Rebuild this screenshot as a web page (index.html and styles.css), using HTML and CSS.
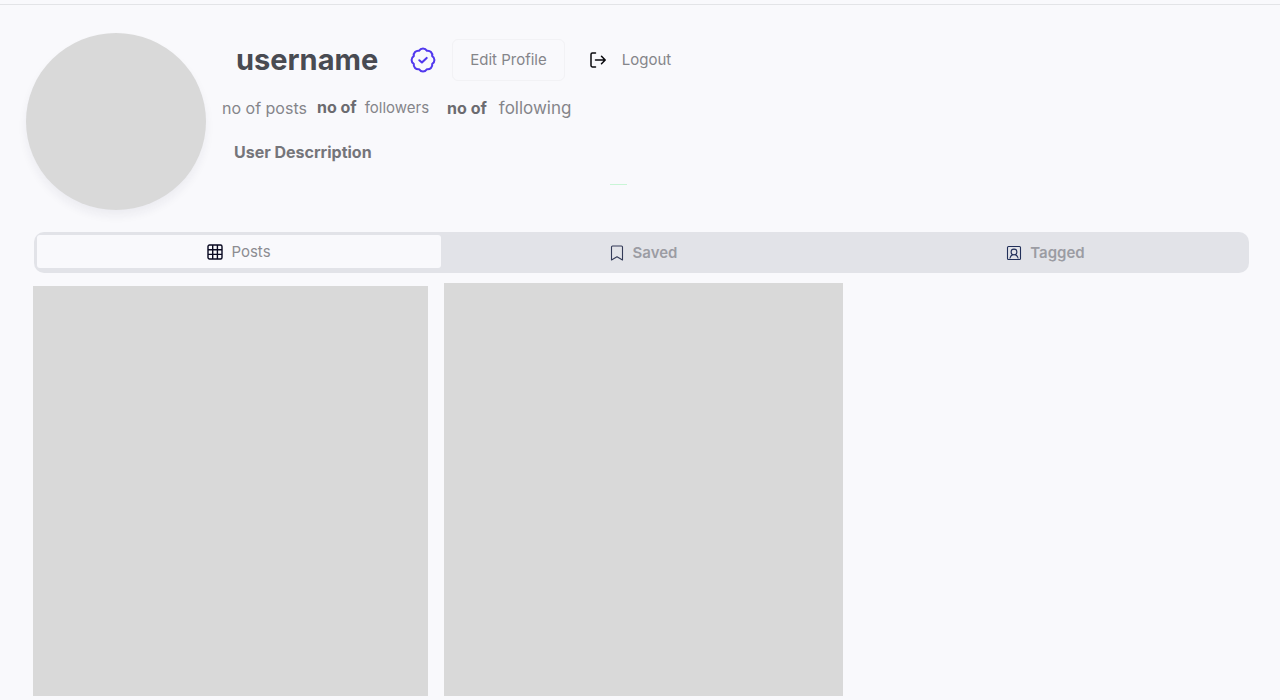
FILE: index.html
```html
<!DOCTYPE html>
<html lang="en">
<head>
<meta charset="utf-8">
<meta name="viewport" content="width=device-width, initial-scale=1">
<title>Profile</title>
<link rel="stylesheet" href="styles.css">
</head>
<body>
<header class="topbar"></header>
<main class="page">
  <section class="profile">
    <div class="avatar"></div>
    <div class="info">
      <div class="identity">
        <h1 class="name">username</h1>
        <svg class="verified" viewBox="0 0 24 24" fill="none" stroke="currentColor" stroke-width="1.9" stroke-linecap="round" stroke-linejoin="round" aria-label="Verified">
          <path d="M3.5 8.4a4.2 4.2 0 0 1 4.9-4.9 4.2 4.2 0 0 1 7.2 0 4.2 4.2 0 0 1 4.9 4.9 4.2 4.2 0 0 1 0 7.2 4.2 4.2 0 0 1-4.9 4.9 4.2 4.2 0 0 1-7.2 0 4.2 4.2 0 0 1-4.9-4.9 4.2 4.2 0 0 1 0-7.2Z"/>
          <path d="M8.6 12.2l2.4 2.1 4.4-4.2"/>
        </svg>
        <button class="edit" type="button">Edit Profile</button>
        <button class="logout" type="button">
          <svg class="logout-icon" viewBox="0 0 18 18" fill="none" stroke="currentColor" stroke-width="1.5" stroke-linecap="round" stroke-linejoin="round">
            <path d="M6.5 2H3.4Q2 2 2 3.4V14.6Q2 16 3.4 16H6.5M6.5 9H16M12.5 5.2L16.2 9l-3.7 3.8"/>
          </svg>
          Logout
        </button>
      </div>
      <div class="stats">
        <span class="posts">no of posts</span>
        <span class="stat"><strong>no of</strong><span class="followers">followers</span></span>
        <span class="stat following"><strong>no of</strong><span class="following-label">following</span></span>
      </div>
      <p class="bio">User Descrription</p>
      <div class="accent"></div>
    </div>
  </section>
  <nav class="tabs">
    <button class="tab active" type="button">
      <svg class="icon" viewBox="0 0 16 16" fill="none" stroke="#080820" stroke-width="1.4">
        <rect x="1" y="1" width="14" height="14" rx="1.5"/>
        <path d="M5.7 1v14M10.4 1v14M1 5.7h14M1 10.4h14"/>
      </svg>
      Posts
    </button>
    <button class="tab" type="button">
      <svg class="icon" viewBox="0 0 16 16" fill="none" stroke="#343b58" stroke-width="1.1" stroke-linejoin="round">
        <path d="M2.5 15V2Q2.5 1 3.5 1h9Q13.5 1 13.5 2v13L8 11.8z"/>
      </svg>
      Saved
    </button>
    <button class="tab" type="button">
      <svg class="icon" viewBox="0 0 16 16" fill="none" stroke="#22305a" stroke-width="1.1">
        <rect x="1.5" y="1.5" width="13" height="13" rx="1"/>
        <circle cx="8" cy="7" r="2.9"/>
        <path d="M3.8 13.5Q4.5 10.3 6.8 9.6M9.2 9.6Q11.5 10.3 12.2 13.5"/>
      </svg>
      Tagged
    </button>
  </nav>
  <section class="gallery">
    <div class="post"></div>
    <div class="post tall"></div>
  </section>
</main>
</body>
</html>
```
FILE: styles.css
```css
* {
  box-sizing: border-box;
}

body {
  margin: 0;
  background: #f9f9fc;
  color: #85858a;
  font-family: Inter, "Liberation Sans", sans-serif;
  font-size: 16px;
  line-height: 20px;
}

button {
  padding: 0;
  border: 0;
  background: none;
  color: inherit;
  font: inherit;
  cursor: pointer;
}

.topbar {
  height: 5px;
  border-bottom: 1px solid #e3e4e7;
}

.page {
  padding: 28px 31px 4px 33px;
}

.profile {
  display: flex;
  gap: 16px;
  margin-left: -7px;
}

.avatar {
  flex: none;
  width: 180px;
  height: 177px;
  border-radius: 50%;
  background: #d9d9d9;
  box-shadow: 0 6px 10px rgba(40, 40, 60, 0.06);
}

.info {
  flex: 1;
  padding-top: 6px;
}

.identity {
  display: flex;
  align-items: center;
  padding-left: 14px;
}

.name {
  margin: 0;
  color: #494b52;
  font-size: 29px;
  line-height: 40px;
  font-weight: 700;
}

.verified {
  width: 26px;
  height: 26px;
  margin-left: 32px;
  color: #5138ee;
}

.edit {
  height: 42px;
  margin-left: 16px;
  padding: 0 17px;
  border: 1px solid #f2f2f5;
  border-radius: 6px;
  font-size: 15px;
}

.logout {
  display: flex;
  align-items: center;
  gap: 15px;
  margin-left: 24px;
  font-size: 15px;
}

.logout-icon {
  width: 18px;
  height: 18px;
  color: #08080c;
}

.stats {
  display: flex;
  align-items: center;
  gap: 10px;
  margin-top: 16px;
}

.stat {
  display: flex;
  align-items: baseline;
  gap: 8px;
}

.stat strong {
  color: #6b6b70;
  font-weight: 700;
}

.followers {
  font-size: 15px;
}

.following {
  gap: 12px;
  margin-left: 8px;
}

.following-label {
  font-size: 17px;
}

.bio {
  margin: 24px 0 0;
  padding-left: 12px;
  color: #75757a;
  font-weight: 700;
}

.accent {
  width: 17px;
  height: 1px;
  margin: 22px 0 0 388px;
  background: #c9f5d6;
}

.tabs {
  display: grid;
  grid-template-columns: 404fr 404fr 401fr;
  height: 41px;
  margin: 22px 0 0 1px;
  padding: 3px;
  border-radius: 10px;
  background: #e2e3e8;
}

.tab {
  display: flex;
  align-items: center;
  justify-content: center;
  gap: 8px;
  color: #9b9ca3;
  font-size: 15px;
  font-weight: 600;
}

.tab.active {
  margin-bottom: 2px;
  border-radius: 3px;
  background: #f9f9fc;
  color: #8c8c91;
  font-weight: 400;
}

.icon {
  width: 16px;
  height: 16px;
}

.gallery {
  display: grid;
  grid-template-columns: 395fr 399fr 390fr;
  align-items: end;
  gap: 16px;
  margin-top: 10px;
}

.post {
  height: 410px;
  background: #d9d9d9;
}

.post.tall {
  height: 413px;
}
```
